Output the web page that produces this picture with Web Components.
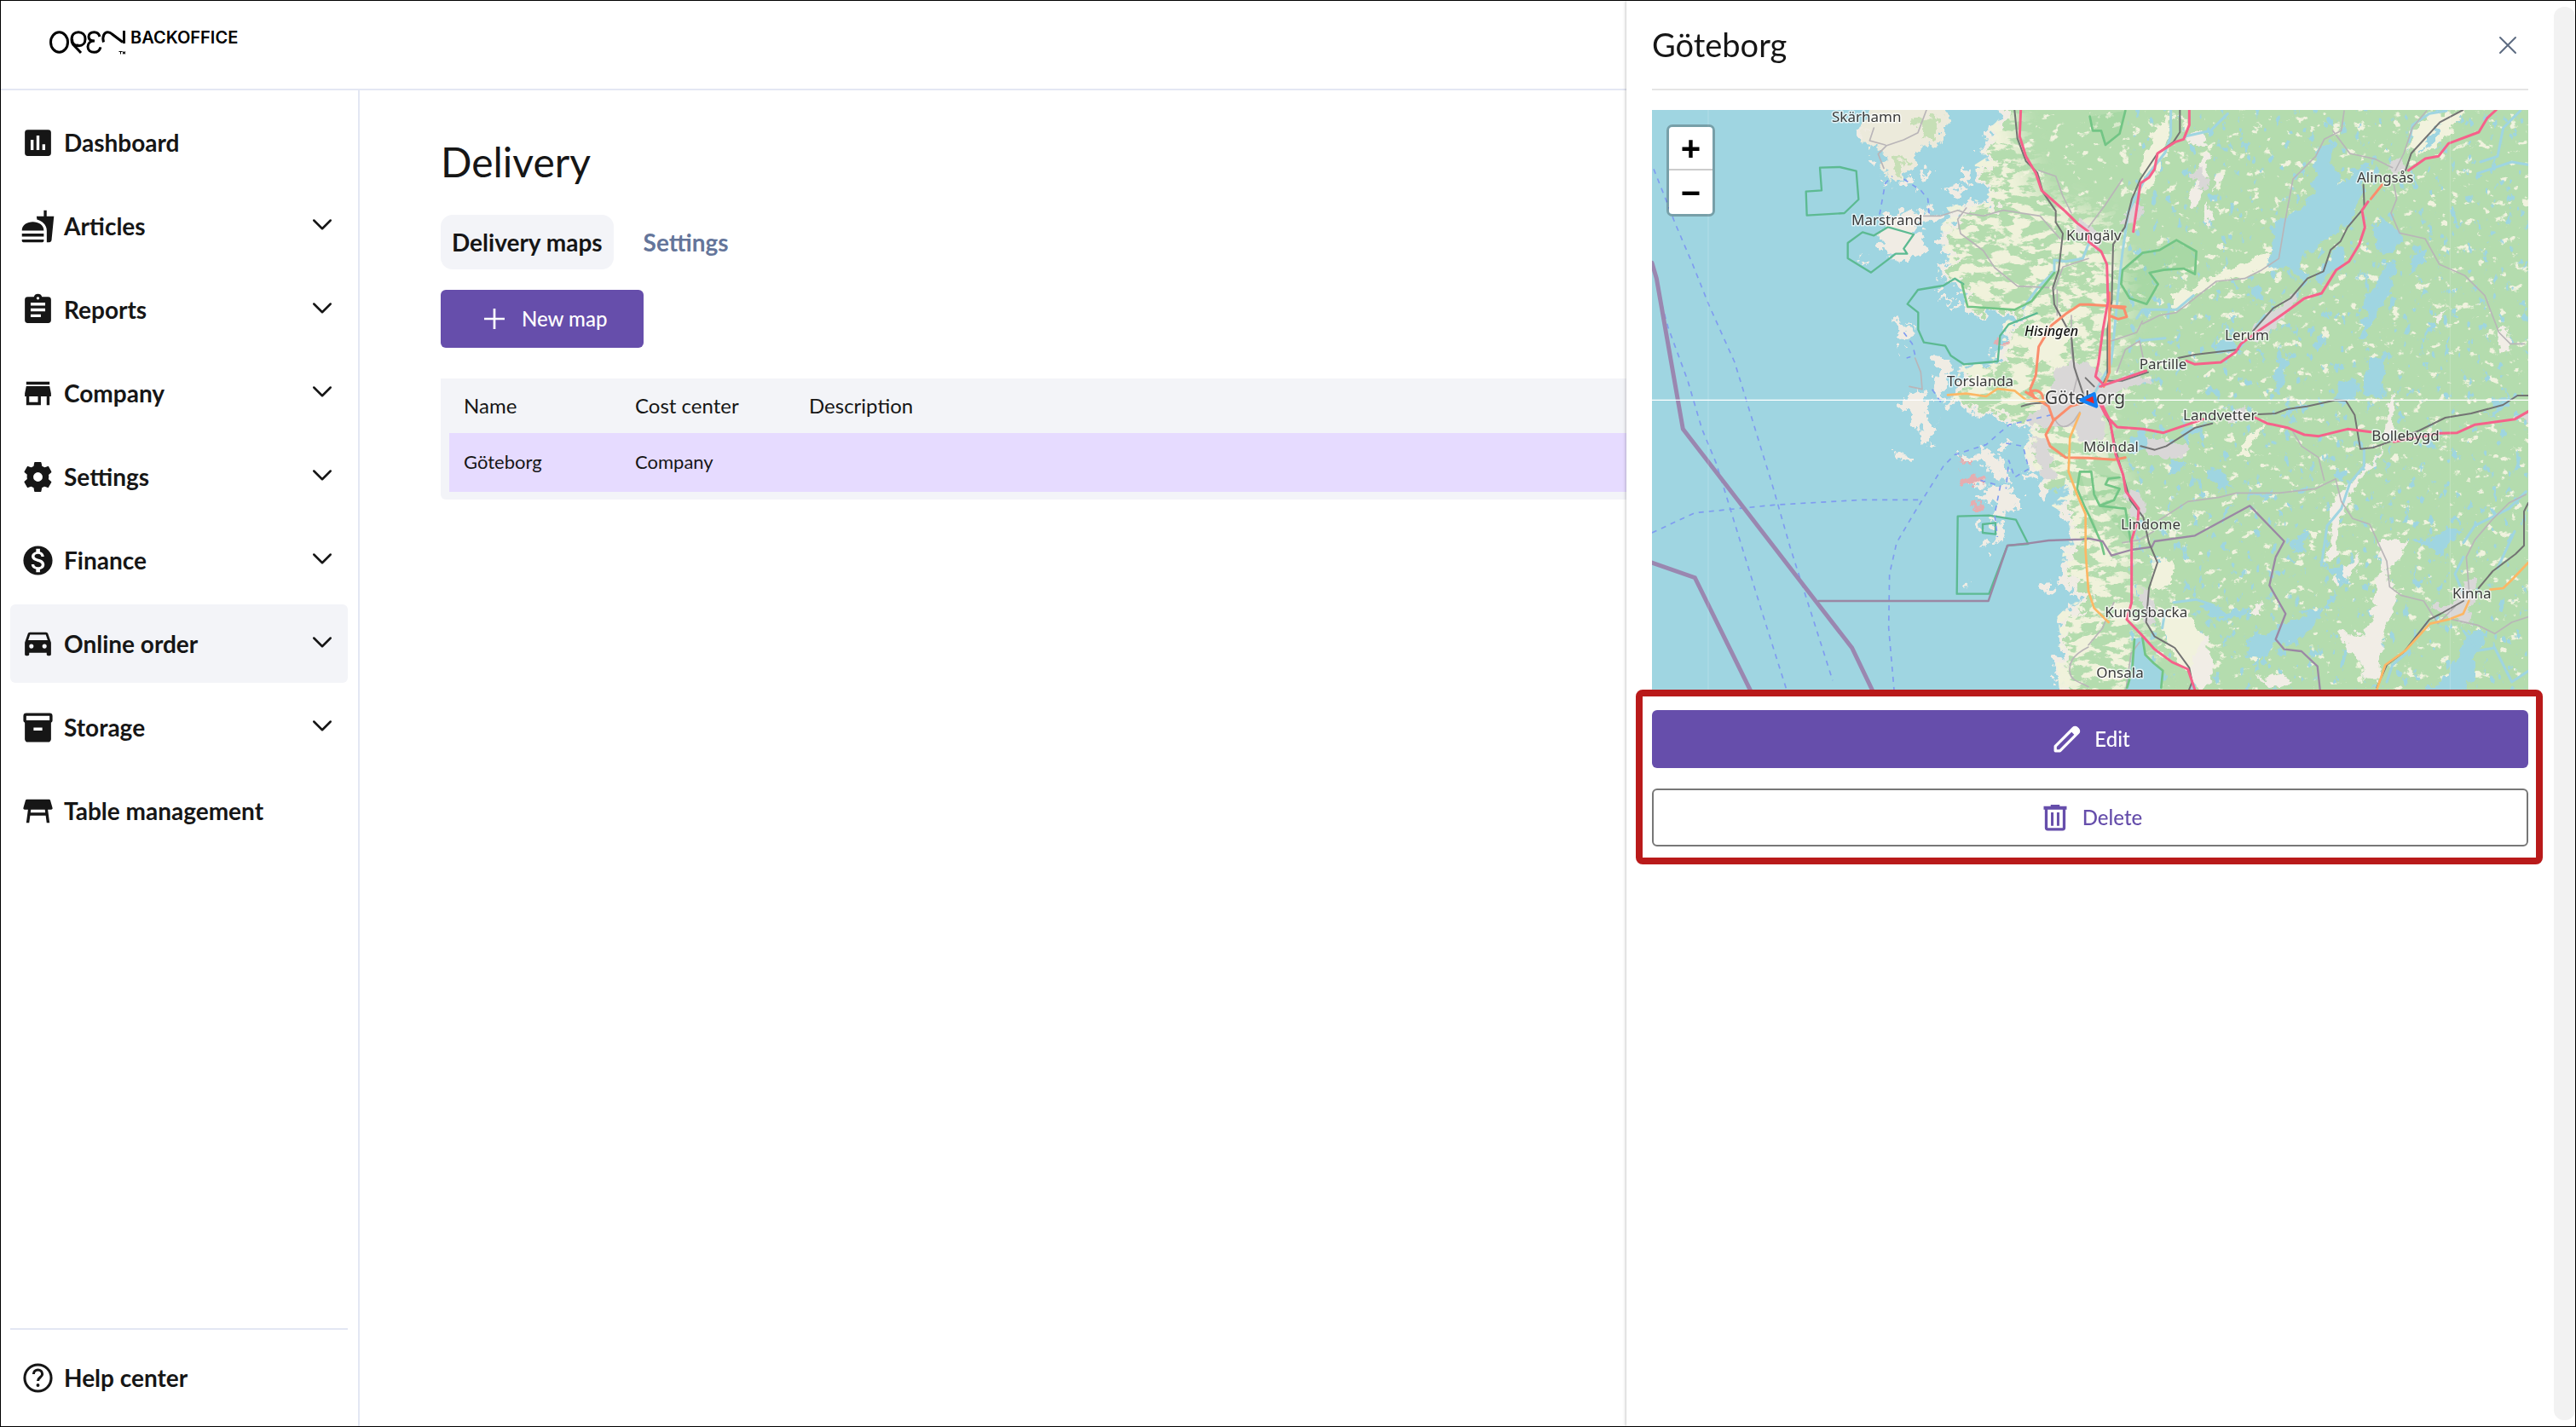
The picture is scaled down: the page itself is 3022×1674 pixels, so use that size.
<!DOCTYPE html>
<html lang="en">
<head>
<meta charset="utf-8">
<meta name="viewport" content="width=device-width, initial-scale=1">
<title>Backoffice – Delivery</title>
<style>
  html, body { margin: 0; height: 100%; background: #fff; }
  body { font-family: Lato, "Open Sans", sans-serif; color: #161616; }
</style>
</head>
<body>
<bo-shell>
  <bo-logo slot="brand"></bo-logo>
  <bo-nav slot="nav">
    <bo-nav-item icon="dashboard">Dashboard</bo-nav-item>
    <bo-nav-item icon="food" expandable>Articles</bo-nav-item>
    <bo-nav-item icon="clipboard" expandable>Reports</bo-nav-item>
    <bo-nav-item icon="store" expandable>Company</bo-nav-item>
    <bo-nav-item icon="gear" expandable>Settings</bo-nav-item>
    <bo-nav-item icon="dollar" expandable>Finance</bo-nav-item>
    <bo-nav-item icon="car" expandable active>Online order</bo-nav-item>
    <bo-nav-item icon="box" expandable>Storage</bo-nav-item>
    <bo-nav-item icon="table">Table management</bo-nav-item>
    <bo-nav-item slot="footer" icon="help">Help center</bo-nav-item>
  </bo-nav>
  <bo-delivery-page></bo-delivery-page>
  <bo-drawer slot="drawer" heading="Göteborg">
    <bo-map></bo-map>
    <bo-highlight>
      <bo-button icon="pencil">Edit</bo-button>
      <bo-button icon="trash" variant="outline">Delete</bo-button>
    </bo-highlight>
  </bo-drawer>
</bo-shell>

<script>
const define = (name, html, setup) => {
  const template = document.createElement('template');
  template.innerHTML = html;
  customElements.define(name, class extends HTMLElement {
    constructor() {
      super();
      this.attachShadow({ mode: 'open' }).append(template.content.cloneNode(true));
    }
    connectedCallback() { if (setup) setup(this, this.shadowRoot); }
  });
};

const ICONS = {
  dashboard: '<path d="M19 3H5a2 2 0 0 0-2 2v14a2 2 0 0 0 2 2h14a2 2 0 0 0 2-2V5a2 2 0 0 0-2-2zM9 17H7v-7h2zm4 0h-2V7h2zm4 0h-2v-4h2z"/>',
  food: '<path d="M18.06 22.99h1.66c.84 0 1.53-.64 1.63-1.46L23 5.05h-5V1h-1.97v4.05h-4.97l.3 2.34c1.71.47 3.31 1.32 4.27 2.26 1.44 1.42 2.43 2.89 2.43 5.29zM1 21.99V21h15.03v.99c0 .55-.45 1-1.01 1H2.01c-.56 0-1.01-.45-1.01-1zm15.03-7c0-8-15.03-8-15.03 0zM1.02 17h15v2h-15z"/>',
  clipboard: '<path d="M19 3h-4.18A3 3 0 0 0 12 1a3 3 0 0 0-2.82 2H5a2 2 0 0 0-2 2v14a2 2 0 0 0 2 2h14a2 2 0 0 0 2-2V5a2 2 0 0 0-2-2zm-7 0a1 1 0 1 1 0 2 1 1 0 0 1 0-2zm2 14H7v-2h7zm3-4H7v-2h10zm0-4H7V7h10z"/>',
  store: '<path d="M20 4H4v2h16zm1 10v-2l-1-5H4l-1 5v2h1v6h10v-6h4v6h2v-6zm-9 4H6v-4h6z"/>',
  gear: '<path d="M13.9 2.2h-4l-.5 2.700c-.7.2-1.300.6-1.900 1L5 5 3 8.500l2 1.800a7 7 0 0 0 0 3.300l-2 1.800L5 19l2.500-.9c.6.500 1.200.8 1.900 1l.5 2.700h4l.5-2.700c.7-.2 1.300-.5 1.900-1l2.600.9 2-3.500-2-1.800a7 7 0 0 0 0-3.300l2-1.800L19 5l-2.600.9c-.6-.5-1.200-.8-1.900-1zM12 15.600a3.600 3.600 0 1 1 0-7.200 3.600 3.600 0 0 1 0 7.200z" stroke="currentColor" stroke-width=".8" stroke-linejoin="round"/>',
  dollar: '<path d="M12 2a10 10 0 1 0 0 20 10 10 0 0 0 0-20zm1.410 16.090V20h-2.670v-1.930c-1.710-.36-3.160-1.460-3.270-3.400h1.960c.1 1.050.82 1.870 2.650 1.870 1.960 0 2.400-.98 2.400-1.590 0-.83-.44-1.610-2.670-2.140-2.480-.6-4.180-1.620-4.180-3.670 0-1.720 1.390-2.840 3.110-3.210V4h2.670v1.950c1.860.45 2.790 1.860 2.850 3.390H14.300c-.05-1.110-.64-1.870-2.220-1.870-1.500 0-2.400.68-2.400 1.640 0 .84.65 1.390 2.670 1.910s4.180 1.390 4.180 3.910c-.01 1.830-1.380 2.830-3.120 3.160z"/>',
  car: '<path d="M18.920 5.010C18.720 4.420 18.160 4 17.500 4h-11c-.66 0-1.210.42-1.420 1.010L3 11v8c0 .55.45 1 1 1h1c.55 0 1-.45 1-1v-1h12v1c0 .55.45 1 1 1h1c.55 0 1-.45 1-1v-8zM7.500 15a1.500 1.500 0 1 1 0-3 1.500 1.500 0 0 1 0 3zm9 0a1.500 1.500 0 1 1 0-3 1.500 1.500 0 0 1 0 3zM5.300 9.300l1.300-3.800h10.800l1.300 3.800z"/>',
  box: '<path d="M20 2H4a2 2 0 0 0-2 2v3.010c0 .72.43 1.340 1 1.690V20c0 1.100 1.100 2 2 2h14c.9 0 2-.9 2-2V8.700c.57-.35 1-.97 1-1.690V4a2 2 0 0 0-2-2zm-5 12H9v-2h6zm5-7H4V4h16z"/>',
  table: '<path d="M21.960 9.730l-1.430-5A1 1 0 0 0 19.570 4H4.430a1 1 0 0 0-.96.730l-1.430 5A1 1 0 0 0 3 11h2.200L4 20h2l.670-5h10.670l.660 5h2l-1.200-9H21a1 1 0 0 0 .96-1.270zM6.930 13l.27-2h9.600l.27 2z"/>',
  help: '<circle cx="12" cy="12" r="9.100" fill="none" stroke="currentColor" stroke-width="1.800"/><path d="M9 9.400a3 3 0 0 1 6 0c0 2.100-3 2.300-3 4.600" fill="none" stroke="currentColor" stroke-width="1.800"/><circle cx="12" cy="17" r="1.150"/>',
  plus: '<path d="M12 4v16M4 12h16" fill="none" stroke="currentColor" stroke-width="1.800"/>',
  chevron: '<path d="M5.500 9l6.500 6.500L18.500 9" fill="none" stroke="currentColor" stroke-width="1.700" stroke-linecap="round" stroke-linejoin="round"/>',
  close: '<path d="M6 6l12 12M18 6L6 18" fill="none" stroke="currentColor" stroke-width="1.300" stroke-linecap="round"/>',
  pencil: '<path d="M2.800 21.200v-3.600L16.900 3.500a1.800 1.800 0 0 1 2.600 0l1 1a1.800 1.800 0 0 1 0 2.600L6.400 21.200z" fill="none" stroke="currentColor" stroke-width="2.200" stroke-linejoin="round"/><path d="M14.500 5.500l4 4 2.800-2.600V4L19 2.500z"/>',
  trash: '<path d="M3 3.200h5.500V2h7v1.200H21v2.600H3z"/><path d="M5 5v15a1.200 1.200 0 0 0 1.200 1.200h11.600A1.200 1.200 0 0 0 19 20V5" fill="none" stroke="currentColor" stroke-width="2.200"/><path d="M9.700 8v10.500M14.300 8v10.500" fill="none" stroke="currentColor" stroke-width="2"/>'
};

define('bo-icon', `
<style>
  :host { display: block; flex: none; width: var(--icon-size, 40px); height: var(--icon-size, 40px); }
  svg { display: block; width: 100%; height: 100%; fill: currentColor; fill-rule: evenodd; }
</style>
<svg viewBox="0 0 24 24" aria-hidden="true"></svg>`,
(el, root) => { root.querySelector('svg').innerHTML = ICONS[el.getAttribute('name')] || ''; });

define('bo-shell', `
<style>
  :host { display: flex; flex-direction: column; box-sizing: border-box; height: 100vh; border: 1px solid #000; overflow: hidden; }
  header { flex: none; box-sizing: border-box; height: 105px; border-bottom: 2px solid #e3e7f3; padding: 34px 56px; }
  .body { flex: 1; display: flex; min-height: 0; }
  .side { flex: none; display: flex; box-sizing: border-box; width: 421px; border-right: 2px solid #e3e7f3; }
  main { flex: 1; min-width: 0; }
</style>
<header><slot name="brand"></slot></header>
<div class="body">
  <div class="side"><slot name="nav"></slot></div>
  <main><slot></slot></main>
</div>
<slot name="drawer"></slot>`);

define('bo-logo', `
<style>
  :host { display: flex; gap: 5px; color: #000; }
  svg { display: block; width: 91px; height: 30px; overflow: visible; }
  span { font: 600 20px/18px Inter, "Liberation Sans", sans-serif; }
</style>
<svg viewBox="0 0 91 30" fill="none" stroke="currentColor" stroke-width="3" aria-hidden="true">
  <ellipse cx="12.500" cy="14.500" rx="10" ry="11.800"/>
  <path d="M38 27l-9-9.500M35.500 18c-7 2-8.500-2-8.500-6.500 0-6 3.500-8.800 8-8.800s8 3 8 8-3 8-7.500 8-8-3-8-8"/>
  <path d="M60 8c-1-3.500-3.500-5.300-6.500-5.300-4 0-6.500 2.200-6.500 5.300s2.500 5 7 5c-5 0-8 3-8 6.800 0 4 3 6.500 7.500 6.500 4 0 6.500-2.500 7.500-6"/>
  <path d="M64.500 14.500c-2-7 1-11.800 5-11.800 2 0 3.500.8 5 2.300L87 14.500M88.500 1v15"/>
  <path d="M82.500 25.500h4M84.500 25.500v3M87.500 28.500v-3l1 2 1-2v3" stroke-width="1"/>
</svg>
<span>BACKOFFICE</span>`);

define('bo-nav', `
<style>
  :host { flex: 1; display: flex; }
  nav { flex: 1; display: flex; flex-direction: column; justify-content: space-between; padding: 15px 12px 11px 11px; }
  .group { display: flex; flex-direction: column; gap: 6px; }
  .foot { border-top: 2px solid #e3e7f3; padding-top: 10px; }
</style>
<nav aria-label="Main">
  <div class="group"><slot></slot></div>
  <div class="foot"><slot name="footer"></slot></div>
</nav>`);

define('bo-nav-item', `
<style>
  :host { display: block; --icon-size: 41px; }
  a { display: flex; align-items: center; gap: 10px; box-sizing: border-box; height: 92px; padding: 0 12px; border-radius: 6px;
      color: inherit; text-decoration: none; font-size: 28px; font-weight: 700; line-height: 32px; }
  :host([active]) a { background: #f3f4f8; }
  .label { flex: 1; }
  .chevron { --icon-size: 36px; display: none; padding-bottom: 4px; }
  :host([expandable]) .chevron { display: block; }
</style>
<a href="#"><bo-icon class="lead"></bo-icon><span class="label"><slot></slot></span><bo-icon class="chevron" name="chevron"></bo-icon></a>`,
(el, root) => {
  const lead = root.querySelector('.lead');
  lead.setAttribute('name', el.getAttribute('icon'));
  lead.connectedCallback();
});

define('bo-button', `
<style>
  :host { display: flex; --icon-size: 36px; }
  button { flex: 1; display: flex; align-items: center; justify-content: center; gap: 14px; box-sizing: border-box; height: 68px; margin: 0;
           padding: 0 43px 0 45px; border: 0; border-radius: 6px; background: #664eab; color: #fff; font: 500 24px/32px Lato, sans-serif; cursor: pointer; }
  :host([variant="outline"]) button { background: #fff; color: #664eab; border: 2px solid #777; }
</style>
<button type="button"><bo-icon></bo-icon><span><slot></slot></span></button>`,
(el, root) => {
  const icon = root.querySelector('bo-icon');
  icon.setAttribute('name', el.getAttribute('icon'));
  icon.connectedCallback();
});

define('bo-delivery-page', `
<style>
  :host { display: flex; flex-direction: column; align-items: flex-start; padding: 56px 96px 0 95px; }
  h1 { margin: 0; font-size: 48px; font-weight: 400; line-height: 56px; }
  .tabs { display: flex; gap: 22px; margin-top: 34px; }
  .tabs a { padding: 16px 13px; border-radius: 14px; font-size: 28px; font-weight: 700; line-height: 32px; color: #64759a; text-decoration: none; }
  .tabs a[aria-current] { background: #f3f4f8; color: #161616; }
  bo-button { margin-top: 24px; }
  bo-table { margin-top: 36px; align-self: stretch; }
</style>
<h1>Delivery</h1>
<div class="tabs"><a href="#" aria-current="page">Delivery maps</a><a href="#">Settings</a></div>
<bo-button icon="plus">New map</bo-button>
<bo-table></bo-table>`);

define('bo-table', `
<style>
  :host { display: block; background: #f3f4f8; border-radius: 0 0 6px 6px; padding: 0 10px 9px; }
  table { width: 100%; border-collapse: collapse; table-layout: fixed; }
  .name { width: 201px; } .cost { width: 204px; }
  th, td { padding: 0 16px 0 17px; text-align: left; vertical-align: middle; }
  th { height: 64px; font-size: 24px; font-weight: 400; line-height: 32px; }
  td { height: 67px; padding-bottom: 2px; font-size: 22px; line-height: 28px; background: #e6dbff; }
</style>
<table>
  <colgroup><col class="name"><col class="cost"><col></colgroup>
  <thead><tr><th scope="col">Name</th><th scope="col">Cost center</th><th scope="col">Description</th></tr></thead>
  <tbody><tr><td>Göteborg</td><td>Company</td><td></td></tr></tbody>
</table>`);

define('bo-drawer', `
<style>
  :host { position: fixed; top: 1px; right: 1px; bottom: 1px; display: flex; width: 1113px; background: #fff; box-shadow: 0 0 4px rgba(0,0,0,.35); }
  section { flex: 1; min-width: 0; padding: 0 30px; }
  header { display: flex; align-items: center; justify-content: space-between; box-sizing: border-box; height: 105px;
           border-bottom: 2px solid #e5e5e5; margin-bottom: 23px; padding-right: 6px; }
  h2 { margin: 0; padding-bottom: 2px; font-size: 38px; font-weight: 400; line-height: 46px; }
  button { --icon-size: 36px; border: 0; margin: 0; padding: 0; background: none; color: #5c6a80; cursor: pointer; }
  .track { flex: none; width: 25px; margin: 7px 0; border-radius: 12px; background: #f2f2f2; }
</style>
<section>
  <header><h2></h2><button type="button" aria-label="Close"><bo-icon name="close"></bo-icon></button></header>
  <slot></slot>
</section>
<div class="track"></div>`,
(el, root) => { root.querySelector('h2').textContent = el.getAttribute('heading'); });

define('bo-highlight', `
<style>
  :host { display: flex; flex-direction: column; gap: 24px; margin: 0 -17px 0 -19px; padding: 16px 9px 13px 11px; border: 8px solid #b91a1a; border-radius: 8px; }
</style>
<slot></slot>`);

define('bo-map', `
<style>
  :host { display: block; position: relative; height: 680px; background: #9fd5e1; }
  svg { display: block; width: 100%; height: 100%; }
  svg.labels { position: absolute; inset: 0; overflow: visible; pointer-events: none; }
  .zoom { position: absolute; top: 17px; left: 17px; display: flex; flex-direction: column; border: 3px solid rgba(0,0,0,.25); border-radius: 7px; background-clip: padding-box; }
  .zoom button { display: flex; align-items: center; justify-content: center; width: 51px; height: 51px; margin: 0; padding: 9px 0 0; border: 0; background: #fff; color: #000; font: 700 40px/42px "Liberation Mono", monospace; cursor: pointer; border-radius: 0 0 4px 4px; }
  .zoom button:first-child { border-bottom: 2px solid #ccc; border-radius: 4px 4px 0 0; }
  .line path { fill: none; stroke-linejoin: round; stroke-linecap: round; }
  .pink path { stroke: #f6618a; stroke-width: 9; }
  .rail path { stroke: #737373; stroke-width: 6; }
  .grey path { stroke: #b9b5b8; stroke-width: 5; }
  .orange path { stroke: #fb8d6c; stroke-width: 9; }
  .amber path { stroke: #fcb765; stroke-width: 8; }
  .river path { stroke: #9fd5e1; stroke-width: 9; }
  .border path { stroke: #9b87a4; stroke-width: 7; }
  .sea path { stroke: #9a87b0; stroke-width: 15; stroke-linejoin: miter; }
  .ferry path { stroke: #7f9cf0; stroke-width: 5; stroke-dasharray: 18 18; stroke-linecap: butt; }
  .park path { stroke: #5cba92; stroke-width: 7; }
  .wood path { stroke: #72c585; stroke-width: 8; fill: rgba(120,200,130,.2); }
  .wood .open { fill: none; }
  text { font-family: "Noto Sans", sans-serif; font-size: 51px; fill: #3a3a3a; stroke: rgba(255,255,255,.7); stroke-width: 9; stroke-linejoin: round; paint-order: stroke; }
  text.city { font-size: 63px; }
  text.island { font-size: 48px; font-style: italic; font-weight: 500; fill: #111; }
</style>
<svg viewBox="24 27 3084 2040" preserveAspectRatio="xMidYMid slice" role="img" aria-label="Map of Göteborg">
  <defs>
    <filter id="coast" x="-5%" y="-5%" width="110%" height="110%"><feTurbulence type="fractalNoise" baseFrequency=".024" numOctaves="5" seed="8"/><feDisplacementMap in="SourceGraphic" scale="90" xChannelSelector="R" yChannelSelector="G"/></filter>
    <filter id="shore" x="-5%" y="-5%" width="110%" height="110%"><feTurbulence type="fractalNoise" baseFrequency=".03" numOctaves="4" seed="2"/><feDisplacementMap in="SourceGraphic" scale="50" xChannelSelector="R" yChannelSelector="G"/></filter>
    <filter id="fields" color-interpolation-filters="sRGB" x="0" y="0" width="100%" height="100%"><feTurbulence type="fractalNoise" baseFrequency=".024 .03" numOctaves="5" seed="5"/><feColorMatrix values="0 0 0 0 .94 0 0 0 0 .95 0 0 0 0 .87 12 0 0 0 -7.900"/><feComposite operator="in" in2="SourceGraphic"/></filter>
    <filter id="farmland" color-interpolation-filters="sRGB" x="0" y="0" width="100%" height="100%"><feTurbulence type="fractalNoise" baseFrequency=".014 .03" numOctaves="5" seed="14"/><feColorMatrix values="0 0 0 0 .94 0 0 0 0 .95 0 0 0 0 .86 14 0 0 0 -6.900"/><feComposite operator="in" in2="SourceGraphic"/></filter>
    <filter id="ponds" color-interpolation-filters="sRGB" x="0" y="0" width="100%" height="100%"><feTurbulence type="fractalNoise" baseFrequency=".036 .022" numOctaves="4" seed="31"/><feColorMatrix values="0 0 0 0 .62 0 0 0 0 .835 0 0 0 0 .88 0 16 0 0 -10.700"/><feComposite operator="in" in2="SourceGraphic"/></filter>
    <filter id="soft" x="-20%" y="-20%" width="140%" height="140%"><feGaussianBlur stdDeviation="45"/></filter>
    <mask id="west" maskUnits="userSpaceOnUse" x="0" y="0" width="3200" height="2100"><path fill="#fff" filter="url(#soft)" d="M1000 0h290l90 330 260 80 60 300-100 350 100 400 100 650H1100L1000 1000z"/></mask>
    <clipPath id="land"><path d="M1265 27L1235 70 1190 110 1165 150 1170 185 1215 185 1160 220 1165 260 1215 290 1200 330 1210 355 1150 340 1110 355 1060 370 1080 400 1040 430 1040 500 1070 530 1030 560 1030 600 1090 620 1115 640 1120 690 1150 730 1220 720 1300 730 1330 725 1270 770 1255 810 1240 830 1245 890 1180 910 1120 915 1100 960 1090 1000 1050 1040 1130 1055 1180 1080 1200 1070 1250 1090 1260 1110 1330 1120 1370 1130 1340 1150 1330 1220 1350 1260 1390 1310 1400 1360 1440 1330 1480 1320 1470 1380 1430 1420 1480 1450 1500 1520 1470 1580 1460 1660 1500 1700 1540 1720 1480 1780 1450 1810 1460 1870 1440 1940 1450 1990 1460 2100H3200V0z"/></clipPath>
  </defs>

  <g filter="url(#coast)" fill="#f0ece4">
    <path d="M1272 0L1242 90 1197 130 1170 170 1175 205 1220 205 1168 240 1172 280 1222 310 1207 350 1217 375 1160 350 1120 365 1065 385 1085 420 1045 450 1045 520 1075 550 1036 580 1036 620 1095 640 1120 665 1125 715 1155 755 1225 745 1305 755 1335 750 1275 795 1260 835 1245 855 1250 915 1185 935 1125 940 1105 985 1095 1025 1055 1065 1135 1080 1185 1105 1205 1095 1255 1115 1265 1135 1335 1145 1375 1155 1345 1175 1335 1245 1355 1285 1395 1335 1405 1385 1445 1355 1485 1345 1475 1405 1435 1445 1485 1475 1505 1545 1475 1605 1465 1685 1505 1725 1545 1745 1485 1805 1455 1835 1465 1895 1445 1965 1455 2015 1465 2145H1700V0z"/>
    <path fill="#b4dcae" d="M1292 0L1265 90 1220 130 1200 170 1205 200 1250 205 1200 240 1200 280 1250 310 1235 350 1250 380 1180 370 1140 385 1095 395 1115 420 1075 450 1075 520 1105 550 1065 580 1065 615 1120 635 1145 660 1150 710 1175 745 1240 735 1320 745 1360 745 1305 790 1290 830 1275 850 1280 910 1215 930 1155 935 1135 980 1125 1020 1090 1055 1160 1070 1210 1090 1230 1080 1280 1105 1290 1125 1360 1135 1410 1150 1375 1175 1365 1240 1385 1280 1425 1330 1435 1380 1475 1350 1515 1340 1505 1400 1465 1440 1515 1470 1535 1540 1505 1600 1495 1680 1535 1720 1575 1740 1515 1800 1485 1830 1495 1890 1475 1960 1485 2010 1495 2140H3220V-40H1292z"/>
    <path fill="#eceadb" d="M800 0L770 90 750 120 800 170 850 180 835 220 860 270 900 260 950 210 960 170 1050 130 1070 0z"/>
    <path fill="#c6dfb6" d="M960 60l70-20-10 80-50 20zM880 200l40-10-10 40-30 10z"/>
    <path d="M860 395l70-15 90-10-20 50-60 20 40 50-30 60-60 10-40-40-40-30 20-40zM1110 220l35 20-5 45-30-20zM1040 300l60-10 30 15-60 20zM1045 480l30 10-10 50-25-20zM900 265l40 5-20 30-30-5zM890 760l25 20 15 50-25 10-20-40zM1030 890l40 5-5 90-20 80-25-60zM950 1000l45 50-10 70 40 30 10-50-20 110-40-30-30-50-40-60zM980 1160l25 10-10 40-20-15zM1200 1220l50 20 20 60-30 20-50-40-70-10-5-35 60 5zM1255 1190l20 10-10 40-20-20zM1215 1350l40 0 20 70-30 40-20-40-50-30zM1270 1370l50 10 0 60-30-10-30-20zM1255 1290l25 10-5 50-25-20zM1220 1460l30 0 10 90-30-20-10-30zM1140 1320l50 0 10 25-50 5zM1340 1305l25 10-10 25-20-10zM890 1240l40 5 0 20-30 0zM1170 1470l20 10-5 30-20-10zM1400 1700l30 5-10 25-25-5zM1190 1555l30-20 0 30-20 15zM1210 80l40-10 10 30-40 10zM980 370l40 0 20 30-30 20zM920 540l35-5 0 20-30 5zM1120 1690l30 10-20 15zM740 100l40 10-10 20-30-10zM780 200l30 5-15 20zM820 260l30 5-10 20zM970 250l40-10-10 20zM960 300l20 5-10 20zM1010 360l10 30-20 5zM760 540l25 5-15 20zM960 480l15 0-5 20zM1050 690l30 0-10 20zM1080 720l30 0-20 25zM1000 640l40 0-10 25zM930 780l15 5-5 25zM890 860l20 5-10 20zM1200 880l20 0-5 20z"/>
    <path fill="#e5adb0" d="M1110 1320l70-15 30 20-50 15-50 10zM1140 1420l50-10-10 25zM1110 1270l40 0-10 20zM1220 850l50-20 10 30-30 10z"/>
  </g>

  <g clip-path="url(#land)">
    <rect x="1000" y="20" width="2140" height="2060" filter="url(#fields)"/>
    <g mask="url(#west)"><rect x="1000" y="20" width="1100" height="2060" filter="url(#farmland)"/></g>
    <rect x="1700" y="20" width="1440" height="2060" filter="url(#ponds)"/>
  </g>

  <g filter="url(#shore)">
    <g fill="#f1ede6">
      <path d="M1960 190l30-10-20 90-40 110-20-10 30-100zM1900 120l60-20 20 40-60 20zM2010 250l30 10-40 60zM1980 350l20 40-20 50-15-60zM2540 1280l60-60 10-160 30-40-10 130-40 100-60 60-80 140-20 150-25 20 5-200zM2590 1540l90 0-20 60-60 60 60 70-60 140-20 160-50 0 0-80-60-80 60 0 20-40 30-130zM2420 1680l100-100-30 80-50 40zM2440 1860l70 10 30 120-60-60zM3000 800l40 0 0 80-30 0zM2770 760l50-30-30 50zM1920 1870l60 0 20 150-50 60-40-60zM2150 2030l80-20 50 30-60 20zM2120 1800l60-50-20 50z"/>
      <path fill="#f1f2dd" d="M1800 90l60-60-20 120-60 140-30 30 0-120zM1860 680l120-60 200-90 100 20-60 40-200 40-160 110zM1780 1600l90 10-30 90-60 20zM1800 1780l110 0 50 110-50 110-60-60zM2140 1150l40-10-70 100-20 0zM2690 100l80-60 120-10-60 80-110 90zM1340 840l130-90 40 60-60 90-80 20z"/>
    </g>
    <g fill="#d9d7d7">
      <path d="M1470 920l90-10 60 80 110-30 60 20-140 40-40 60 10 80-60 50-60-60-100 0-60-30 60-60zM1520 400l50 40 40 40-20 50-70-70zM1920 250l40-20 20 60-20 20zM2610 220l50-20 30 40-60 30zM2130 820l40-60 130-100-20 60-110 110zM1760 1180l160 30-20 40-130 0zM1690 1370l60 10 10 60-50 20zM1740 1700l40 40 20 90-40 10zM2770 1770l70 0 50-90 30 0-20 160-60-20zM1360 1180l60 10 20 130-40 10zM1720 360l30 0-20 60-60 10zM2080 1080l20-10 10 50-50 0zM3060 1110l60-20 0 40z"/>
    </g>
    <g fill="#9fd5e1">
      <path d="M2370 140l60 0-10 100 40 20-20 40 70-80 40 0-30 100-20 60-30 50-60 50-90 50-10 50 20 50-20 10-30-50-90-10 20-60 10-100 90-50 40-60z"/>
      <path d="M2590 400l70 60-10 50-50 30-30-40-10-60zM2440 510l30 50-60 50-30 40-20-40 50-60zM2600 560l50 10-30 100-60 100-20 60-30 0 30-100-20-20 50-60zM2700 540l40-20 10 40-60 50zM2760 770l20 20-30 40zM2560 900l60-20-20 60-10 100-60-10-10-50zM2450 980l60 0-10 60-50 30-20-40zM2230 900l30 10-20 120-30-20zM2350 850l40-50 10 50-30 40zM2000 860l60-40 30 60-90 0zM2130 650l20-20 30 60-40 10z"/>
      <path d="M2380 1630l70 10 20 50-70 70-50 90-80 50-60 10-60 70-20-30-20-50 60-20 120-70 120-40 50-80zM2300 1520l30-20-10 80-50 0zM2780 1530l40-40 30 20 30-10-60 60-20 40-30-30-70-20zM2900 1860l50-10 0 50-40 40 0 90-50 60-150 20 40-50 60-20 40-70zM1980 1290l50 10 40 50-40 10-60-40zM1860 1260l40 0-10 50-40-10zM1710 1170l50-10 10 50-60 30zM2110 1380l100-10-20 20-80 0zM2280 1370l60-20-30 30-40 0zM2430 1300l50-10-30 50zM1980 1760l60 30 80-10-10 30-100 10-60-40zM1890 1160l100-40-60 50-40 10zM2250 1080l100-20-40 30-70 10zM3000 1060l60-30-20 40-80 30zM2600 1260l30 10-20 30zM2710 1660l30 20-40 10z"/>
      <path d="M2060 760l30 0-20 20zM2730 180l20-60 60-40-40 60z"/>
    </g>
  </g>
  <path fill="#9fd5e1" d="M1724 1888l26-6 10 60 30 30 32 26-8 69h-124l16-70z"/>

  <g class="line">
    <g class="river">
      <path d="M1850 27v90l-20 60-70 90-60 120-20 140-10 90-30 300-60 110M2050 40l-60 60-90 20M1560 500l-20 50-60 10-40-5 0 40-60 60-50 70M1730 760l20-30 120 0 60-50M1730 840l100-10M2180 750l-30 40M2690 140l10-60 60-40 60-10M3080 30l-60 60-20 100-60 20M2930 250l60-20 60-20 60 10"/>
      <path d="M2530 1220l0 60-50 60-30 90-50 60-20 140M3100 1370l-60 60-120 60-40 60M2880 1600l-30 60 30 70M1860 1760l80-10 60 20M1820 1850l10-60M2690 1930l-60 50-20 60M2880 1860l50 70 60-10 60 120 60-40M3060 1510l-60 130" stroke-width="6"/>
    </g>
    <g class="grey">
      <path d="M990 27l-30 80-50 25-60 20-30 30 20 50M805 90l-15 45 55 15M980 400l60 0 60-20 30 10 60 10 70-20 130 20 70 80M1130 372l-30 40 10 50 80 60 40 60 80 65 110 5M1385 240l60 20 25 70 30 60M1440 660l30-80 90-30M950 900l20 50 5 60-45-10M1450 750v-90M1500 750l0 130 20 90-20 80M1560 440l60-80 60-90M1750 770l-20 40-90 30M1660 950l30-80 50-30 15 70M1750 780l60-30 60-10 140-110 100-10 60-30 60-40 20-120 30-160 80-80 30-60 60-30 10-70M2420 100l60 80 90 20 60 30M2640 240l30-60 30-90 50-60M2635 290l10 50-20 50 30 70 90 20 50 90 90 40 70 70 50 130 40 40h50"/>
      <path d="M1810 1470l100-65 110-15 60-15h150l130-15 50-25 20-10 20 80 40 60 60 20 60 130 10 90 40 30 80 20 50 80 60-60M2280 1160l30 50 60 40 20 80M2900 1720l-10-120 30-60 60-70 60-60 60-30M2840 1820l90 20 60 30 60-40 60-20M1560 1910l50-60 20-50 20-40M1740 1900l-30 40-20 140M1560 1917c-60 30-70 60-65 90s30 30 65 50M1440 1110c20 50 50 30 70 10l20-30M1680 1550l60-10 50-30"/>
    </g>
    <g class="park">
      <path d="M615 230l70-2 58 14 8 100-50 48-132 8-3-84 55-4zM713 495l52-38 40 12 50-30 90 26-35 50 12 18-40 0-87 66-82-50zM1120 640l-30-20-40 25-90 15-37 50 38 30 0 60 20 45 75 12 20 35 45 30 120-10 8-90 30-40 100-40M1100 1457l110-3 95 15 43 85-73 6-65 170-113 0zM1188 1485l45-5v40l-45-5z"/>
    </g>
    <g class="wood">
      <path class="open" d="M1115 640l20 80 15 0 150 10 60-30 80-100"/>
      <path d="M1565 50l10 50 30 0 15 50 50-40 20-80M1680 590l70-60 60-10 60-35 70 40-5 80-40-20-70 5-50 10 30 40-40 70-60-20-30-50z"/>
      <path d="M1530 1300l40 0 10 80 20 40 50-20 20-40-50-15 10-20 40-5M1530 1300l-10 60 25 60 20 40 40 90 10 40M1600 1420l90 10 20 120"/>
      <path class="open" d="M1750 1884l10 60 30 30 32 26-6 60M1722 1890l-8 110-18 60"/>
    </g>
    <g class="ferry">
      <path d="M30 235l40 100 35 90 60 140 60 150 90 200 135 440 60 210 150 470M40 640l40 150 70 190 50 170 50 120 160 520 120 380M24 1515l150-70 280-28 310-18h200M1430 1100l-150 35-80 70-110 35-40 40-100 160-65 110-25 110-3 190 28 320M825 395l20-110 25-25M910 270l60 40 25 30 5 60M910 810l30 40 10 40-30 10M1010 1010l40 60M1180 1330l70 20-20 100 10 80M1270 1200l60 10 20 80-50 30-20-60-10 100"/>
    </g>
    <g class="sea">
      <path d="M24 1620l151 53 197 400M24 565l16 55 93 530 467 605 128 165 72 150"/>
    </g>
    <g class="border"><path d="M610 1755h598l67-195 75-8 70-10 120-4 20-3 50 10 31 50 70-20 72-10 10-20 142-20 193-105 121 125-30 55-22 100 57 100-35 90 30 35 61 7 56 53 10 90"/></g>
    <g class="rail">
      <path d="M1300 27l10 100 30 80 40 40 20 70 45 65 0 40 25 40-15 130-20 60 5 60 60 110 10 110 40 120 20 5M1882 27v78l-23 35-56 40-60 90-30 70-25 100-41 60-5 200-15 100v160l-20 40M2878 27l-81 43-101 110-20 60M2528 290l3 80-59 70-25 50-35 30-25 75-56 25-60 70-61 35-71 80M2087 870l-152 18-60 12M1580 1000l-30-30M1325 1070c30-12 60-15 100-10M1620 980l60 0 90-30"/>
      <path d="M2158 1098l60-3 41-15 70-10 102-22 35 2 31 50 20 120 46-5 71-25 91-35 91-45 91-15 112-30 51-33h37M1996 1130l-60 15-102 65-40 13-50-13M1600 1060l36 70 25 110 46 160 46 60 20 90 30 70-30 90-10 120 30 50 71 40 51 70 10 50-16 40M3108 1410l-15 30v120l-30 30-80 60-50 60M2880 1755l-80 45-40 20-90 115-60 45-35 80"/>
    </g>
    <g class="orange"><path d="M1690 720l-130-8h-30l-50 33-50 40-45 75-10 100-20 50 15 30M1340 1020l80 50 17 50-27 50 15 40 55 40 80 2 90 6 40-8M1437 1120l60-50 70-20M1645 720l40 5 10 30-30 8-25-10M1634 670v280l-20 50M2594 290l-40 50M1350 1025c20-20 50-10 50 20"/></g>
    <g class="amber"><path d="M1065 1030l65-5 70 10 40-27 60 7 40 32 80 5M1530 1095l-35 85-5 120 30 80 30 70v130l10 140 20 60 51 50M3108 1620l-57 60-31 30-46 5M2899 1755l-20 45-51 20-66 15-87 95-70 50-31 90"/></g>
    <g class="pink">
      <path d="M1322 27l-4 93 22 70 35 60 20 60 45 40 40 35 40 40 40 30 0 35 45 35 20 45 4 130-18 100-16 120-10 45 25 25M1915 27v53l-20 50-30 10-62 40-10 55-20 30-30 20-25 170M2995 27l-31 28-30 50-107 40-35 45-46 8-60 42M2544 350l-21 30 10 60-20 60-36 60-45 30-51 82-61 18-61 45-50 35-51 35-61 45-20 30-51 35-91 7-30-12M1763 945l-102 35-60 20"/>
      <path d="M1600 1060l20 40 41 43 92 7 71 13 81-28 60-20M2148 1110l41 20 71 15 60 25 51 5 101-25 82 10M2635 1195l162-30 61-2 61-28 142-20 47-27M1606 1060l30 60 20 120 26 70 10 60 45 60-3 40-22 70v220l-17 60 48 50 50 55 61 45 56 25 27 80"/>
    </g>
  </g>

  <path d="M24 1048h3084" stroke="#fff" stroke-width="4"/>
  <path d="M222 27v2040M2833 27v2040" stroke="#fff" stroke-opacity=".3" stroke-width="2"/>
</svg>
<svg class="labels" viewBox="24 27 3084 2040" preserveAspectRatio="xMidYMid slice">
  <text x="657" y="69">Skärhamn</text>
  <text x="726" y="432">Marstrand</text>
  <text x="1482" y="487">Kungälv</text>
  <text class="island" x="1335" y="822">Hisingen</text>
  <text x="1062" y="998">Torslanda</text>
  <text class="city" x="1406" y="1062">Göteborg</text>
  <text x="2505" y="283">Alingsås</text>
  <text x="2040" y="836">Lerum</text>
  <text x="1739" y="938">Partille</text>
  <text x="1893" y="1120">Landvetter</text>
  <text x="2557" y="1190">Bollebygd</text>
  <text x="1542" y="1230">Mölndal</text>
  <text x="1674" y="1502">Lindome</text>
  <text x="1618" y="1813">Kungsbacka</text>
  <text x="1588" y="2025">Onsala</text>
  <text x="2841" y="1745">Kinna</text>
  <path d="M1534 1048l46-22 8 44z" fill="#e8262a" stroke="#1180f5" stroke-width="12" stroke-linejoin="round"/>
</svg>
<div class="zoom"><button type="button" aria-label="Zoom in">+</button><button type="button" aria-label="Zoom out">−</button></div>`);
</script>
</body>
</html>
